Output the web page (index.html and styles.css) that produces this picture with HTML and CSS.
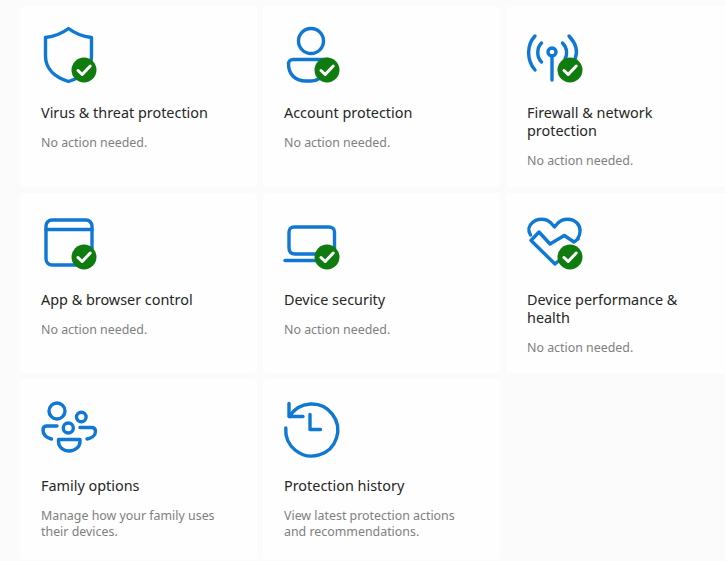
FILE: index.html
```html
<!DOCTYPE html>
<html lang="en">
<head>
<meta charset="utf-8">
<title>Security at a glance</title>
<link rel="stylesheet" href="styles.css">
</head>
<body>
<main class="grid">
  <section class="card">
    <svg class="icon" viewBox="0 0 60 60"><path class="st" d="M27.500 3.500C21 8.500 13 11.500 4.500 12.500V31C4.500 43 13 52 27.500 56.500C42 52 50.500 43 50.500 31V12.500C42 11.500 34 8.500 27.500 3.500Z"/><g class="badge"><circle cx="43" cy="45" r="12.500"/><path d="M37 45.500l4.200 4 8-8.500"/></g></svg>
    <h2 class="title">Virus &amp; threat protection</h2>
    <p class="desc">No action needed.</p>
  </section>
  <section class="card">
    <svg class="icon" viewBox="0 0 60 60"><circle class="st" cx="27" cy="16" r="12.500"/><path class="st" d="M9 34.500H44V44C40 52 33 56 27 56H22C12 56 4.500 50 4.500 39C4.500 36.500 6.500 34.500 9 34.500Z"/><g class="badge"><circle cx="43" cy="45" r="12.500"/><path d="M37 45.500l4.200 4 8-8.500"/></g></svg>
    <h2 class="title">Account protection</h2>
    <p class="desc">No action needed.</p>
  </section>
  <section class="card">
    <svg class="icon" viewBox="0 0 60 60"><circle class="st" cx="25" cy="27" r="4"/><path class="st" d="M25 31V55"/><path class="st" d="M8 11C-0.500 20 -0.500 35 8 45M14.500 18C9.500 23 9.500 32 14.500 37M35.500 18C40.500 23 40.500 30 38 34M42 11C50.500 20 50.500 28 48 34"/><g class="badge"><circle cx="43" cy="45" r="12.500"/><path d="M37 45.500l4.200 4 8-8.500"/></g></svg>
    <h2 class="title">Firewall &amp; network protection</h2>
    <p class="desc">No action needed.</p>
  </section>
  <section class="card">
    <svg class="icon" viewBox="0 0 60 60"><rect class="st" x="5" y="8" width="46" height="45" rx="6"/><path class="st" d="M5 17.500H51"/><g class="badge"><circle cx="43" cy="45" r="12.500"/><path d="M37 45.500l4.200 4 8-8.500"/></g></svg>
    <h2 class="title">App &amp; browser control</h2>
    <p class="desc">No action needed.</p>
  </section>
  <section class="card">
    <svg class="icon" viewBox="0 0 60 60"><path class="st" d="M38 42H11C7 42 5 40 5 36V20C5 17 7 15 10 15H45C48 15 50.500 17 50.500 20V36"/><path class="st" d="M1 48.500H36"/><g class="badge"><circle cx="43" cy="45" r="12.500"/><path d="M37 45.500l4.200 4 8-8.500"/></g></svg>
    <h2 class="title">Device security</h2>
    <p class="desc">No action needed.</p>
  </section>
  <section class="card">
    <svg class="icon" viewBox="0 0 60 60"><path class="st" d="M3.500 23C0.500 18 2 13.500 5 11C10 6 19 6 24 11L27.500 15L31 11C36 6 45 6 50 11C54 15 54 22 50.500 27"/><path class="st" d="M4 28.500L12 20L23 32L37.300 23.500L47 30L51 27M4 28.500L28 52L35 46"/><g class="badge"><circle cx="43" cy="45" r="12.500"/><path d="M37 45.500l4.200 4 8-8.500"/></g></svg>
    <h2 class="title">Device performance &amp; health</h2>
    <p class="desc">No action needed.</p>
  </section>
  <section class="card">
    <svg class="icon" viewBox="0 0 60 60"><circle class="st" cx="16" cy="13" r="8"/><circle class="st" cx="40.300" cy="19" r="4.800"/><circle class="st" cx="27.300" cy="30" r="5"/><path class="st" d="M16 28H6C3.500 28 2 29.700 2 32C2 36 5 39.500 10.500 41M39 29.500H50.500C53 29.500 54.500 31 54.500 33.500C54.500 37 51 40 46 41"/><path class="st" d="M17.500 41.500H39V43.500C39 49 34 53 28 53C22 53 17.500 49 17.500 43.500Z"/></svg>
    <h2 class="title">Family options</h2>
    <p class="desc">Manage how your family uses their devices.</p>
  </section>
  <section class="card">
    <svg class="icon" viewBox="0 0 60 60"><path class="st" d="M5.500 18.500A26 26 0 1 1 1.800 30"/><path class="st" d="M5 5.500V18.500H19M26 16.500V31.500H36.500"/></svg>
    <h2 class="title">Protection history</h2>
    <p class="desc">View latest protection actions and recommendations.</p>
  </section>
</main>
</body>
</html>
```
FILE: styles.css
```css
html, body {
  margin: 0;
  height: 100%;
  overflow: hidden;
  background: #fbfbfb;
}
.grid {
  display: grid;
  grid-template-columns: repeat(3, 237px);
  grid-auto-rows: 180.500px;
  gap: 6px;
  padding: 6px 0 0 20px;
  font-family: "Noto Sans", "Liberation Sans", sans-serif;
}
.card {
  background: #fefefe;
  border-radius: 4px;
  padding: 19px 21px 0;
}
.icon {
  display: block;
  width: 60px;
  height: 60px;
  overflow: visible;
  margin-bottom: 19px;
}
.st {
  fill: none;
  stroke: #0f78d4;
  stroke-width: 3.400;
  stroke-linecap: round;
  stroke-linejoin: round;
}
.badge circle {
  fill: #107c10;
}
.badge path {
  fill: none;
  stroke: #fff;
  stroke-width: 3;
  stroke-linecap: round;
  stroke-linejoin: round;
}
.title {
  margin: 0;
  font-size: 14.400px;
  line-height: 18px;
  font-weight: 400;
  color: #262626;
}
.desc {
  margin: 13px 0 0;
  font-size: 12.400px;
  line-height: 16px;
  color: #808080;
}
```
